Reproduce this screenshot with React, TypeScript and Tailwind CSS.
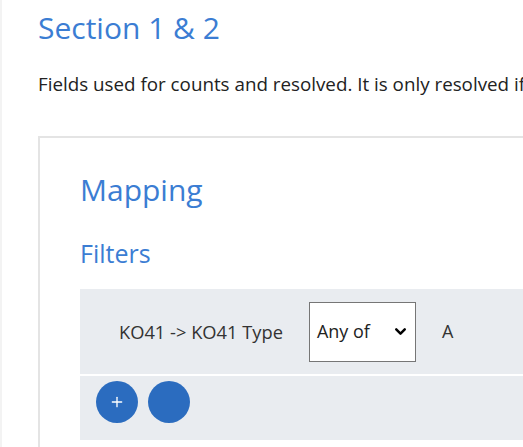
import { Plus, ChevronDown } from 'lucide-react';

const font = { fontFamily: '"Open Sans", "Liberation Sans", sans-serif' };

function FilterRow() {
  return (
    <div className="flex h-[85px] items-center gap-[26px] pl-[39px] text-[#333]">
      <span className="whitespace-nowrap text-[18.3px]">KO41 -&gt; KO41 Type</span>
      <div className="flex h-[60px] w-[107px] shrink-0 items-center justify-between border-[1.5px] border-[#767676] bg-white pl-[7px] pr-[6px]">
        <span className="text-[18px] text-[#222]">Any of</span>
        <ChevronDown size={17} strokeWidth={3.5} className="text-black" />
      </div>
      <span className="text-[18px]">A</span>
    </div>
  );
}

export default function App() {
  return (
    <div
      className="h-[447px] w-[523px] overflow-hidden border-l-2 border-[#f3f3f3] bg-white pl-[36px]"
      style={font}
    >
      <h1 className="pt-[8px] text-[30px] leading-[40px] text-[#3b7dd3]">Section 1 &amp; 2</h1>
      <p className="mt-[23px] whitespace-nowrap text-[18.8px] leading-[26px] text-[#222]">
        Fields used for counts and resolved. It is only resolved if
      </p>
      <div className="mt-[39px] w-[600px] border-l-2 border-t-2 border-[#e4e4e4] pb-[40px] pl-[40px] pt-[32px]">
        <h2 className="text-[30px] leading-[40px] text-[#3b7dd3]">Mapping</h2>
        <h3 className="mt-[26px] text-[25px] leading-[34px] text-[#3b7dd3]">Filters</h3>
        <div className="mt-[19px] bg-[#e9ecf0]">
          <FilterRow />
          <div className="h-[2px] bg-white" />
          <div className="flex h-[64px] gap-[10px] pl-[16px] pt-[5px]">
            <button className="flex h-[42px] w-[42px] items-center justify-center rounded-full bg-[#2b6cbf] text-white">
              <Plus size={16} strokeWidth={2} />
            </button>
            <button className="h-[42px] w-[42px] rounded-full bg-[#2b6cbf]" />
          </div>
        </div>
      </div>
    </div>
  );
}
